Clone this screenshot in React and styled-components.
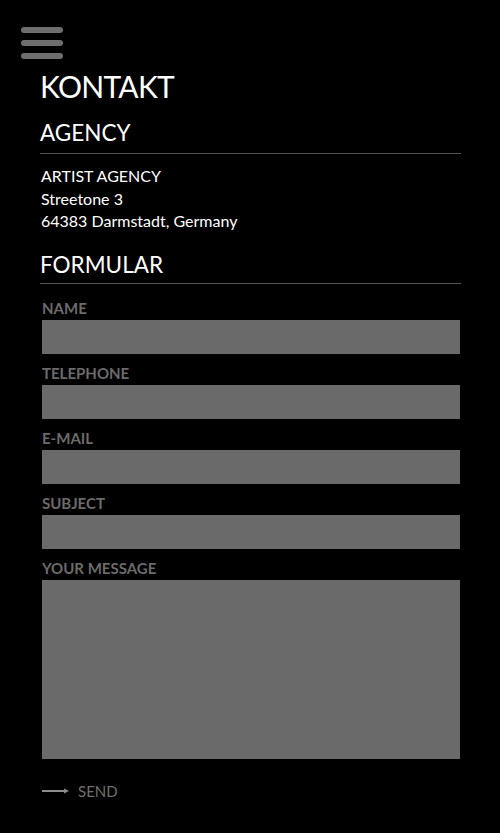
import styled, { createGlobalStyle } from "styled-components";

const GlobalStyle = createGlobalStyle`
  html, body {
    margin: 0;
    padding: 0;
    background: #000;
  }
  body {
    font-family: Lato, "Open Sans", sans-serif;
    color: #fff;
  }
  * {
    box-sizing: border-box;
  }
`;

const Page = styled.div`
  width: 500px;
  min-height: 833px;
  background: #000;
  padding: 27px 39px 0 40px;
`;

const MenuButton = styled.button`
  display: flex;
  flex-direction: column;
  gap: 7px;
  width: 42px;
  padding: 0;
  margin: 0 0 0 -19px;
  background: none;
  border: none;
  cursor: pointer;
`;

const Bar = styled.span`
  display: block;
  height: 6px;
  border-radius: 3px;
  background: #6e6e6e;
`;

const Title = styled.h1`
  margin: 7px 0 0;
  font-size: 30px;
  font-weight: 400;
  letter-spacing: -0.7px;
  line-height: 40px;
`;

const SectionTitle = styled.h2`
  margin: ${(p) => p.$top}px 0 0;
  font-size: 22.5px;
  font-weight: 400;
  line-height: 30px;
  padding-bottom: ${(p) => p.$pad}px;
  border-bottom: 1px solid #555;
`;

const Address = styled.div`
  margin-top: 11px;
  padding-left: 1px;
  font-size: 16px;
  line-height: 22.5px;
`;

const Form = styled.form`
  margin-top: 15px;
  padding: 0 1px 0 2px;
  display: flex;
  flex-direction: column;
  gap: 10px;
`;

const Field = styled.label`
  display: flex;
  flex-direction: column;
  gap: 3px;
`;

const LabelText = styled.span`
  font-size: 15px;
  font-weight: 700;
  line-height: 18px;
  color: #6b6b6b;
`;

const Input = styled.input`
  height: 34px;
  border: none;
  background: #6a6a6a;
  outline: none;
  padding: 0 8px;
  color: #fff;
  font: inherit;
`;

const Message = styled.textarea`
  height: 179px;
  border: none;
  background: #6a6a6a;
  outline: none;
  resize: none;
  padding: 8px;
  color: #fff;
  font: inherit;
`;

const SendButton = styled.button`
  display: flex;
  align-items: center;
  gap: 9px;
  margin-top: 13px;
  padding: 0;
  background: none;
  border: none;
  color: #707070;
  font-family: inherit;
  font-size: 15px;
  cursor: pointer;
  align-self: flex-start;
`;

const fields = ["NAME", "TELEPHONE", "E-MAIL", "SUBJECT"];

function App() {
  return (
    <Page>
      <GlobalStyle />
      <MenuButton type="button" aria-label="Menu">
        <Bar />
        <Bar />
        <Bar />
      </MenuButton>
      <Title>KONTAKT</Title>
      <SectionTitle $top={12} $pad={5}>AGENCY</SectionTitle>
      <Address>
        ARTIST AGENCY
        <br />
        Streetone 3
        <br />
        64383 Darmstadt, Germany
      </Address>
      <SectionTitle $top={17} $pad={3}>FORMULAR</SectionTitle>
      <Form onSubmit={(e) => e.preventDefault()}>
        {fields.map((f) => (
          <Field key={f}>
            <LabelText>{f}</LabelText>
            <Input type="text" />
          </Field>
        ))}
        <Field>
          <LabelText>YOUR MESSAGE</LabelText>
          <Message />
        </Field>
        <SendButton type="submit">
          <svg width="27" height="6" viewBox="0 0 27 6">
            <line x1="0" y1="3" x2="23" y2="3" stroke="#8c8c8c" strokeWidth="2" />
            <path d="M22 0.5 L27 3 L22 5.5 Z" fill="#8c8c8c" />
          </svg>
          SEND
        </SendButton>
      </Form>
    </Page>
  );
}

export default App;
